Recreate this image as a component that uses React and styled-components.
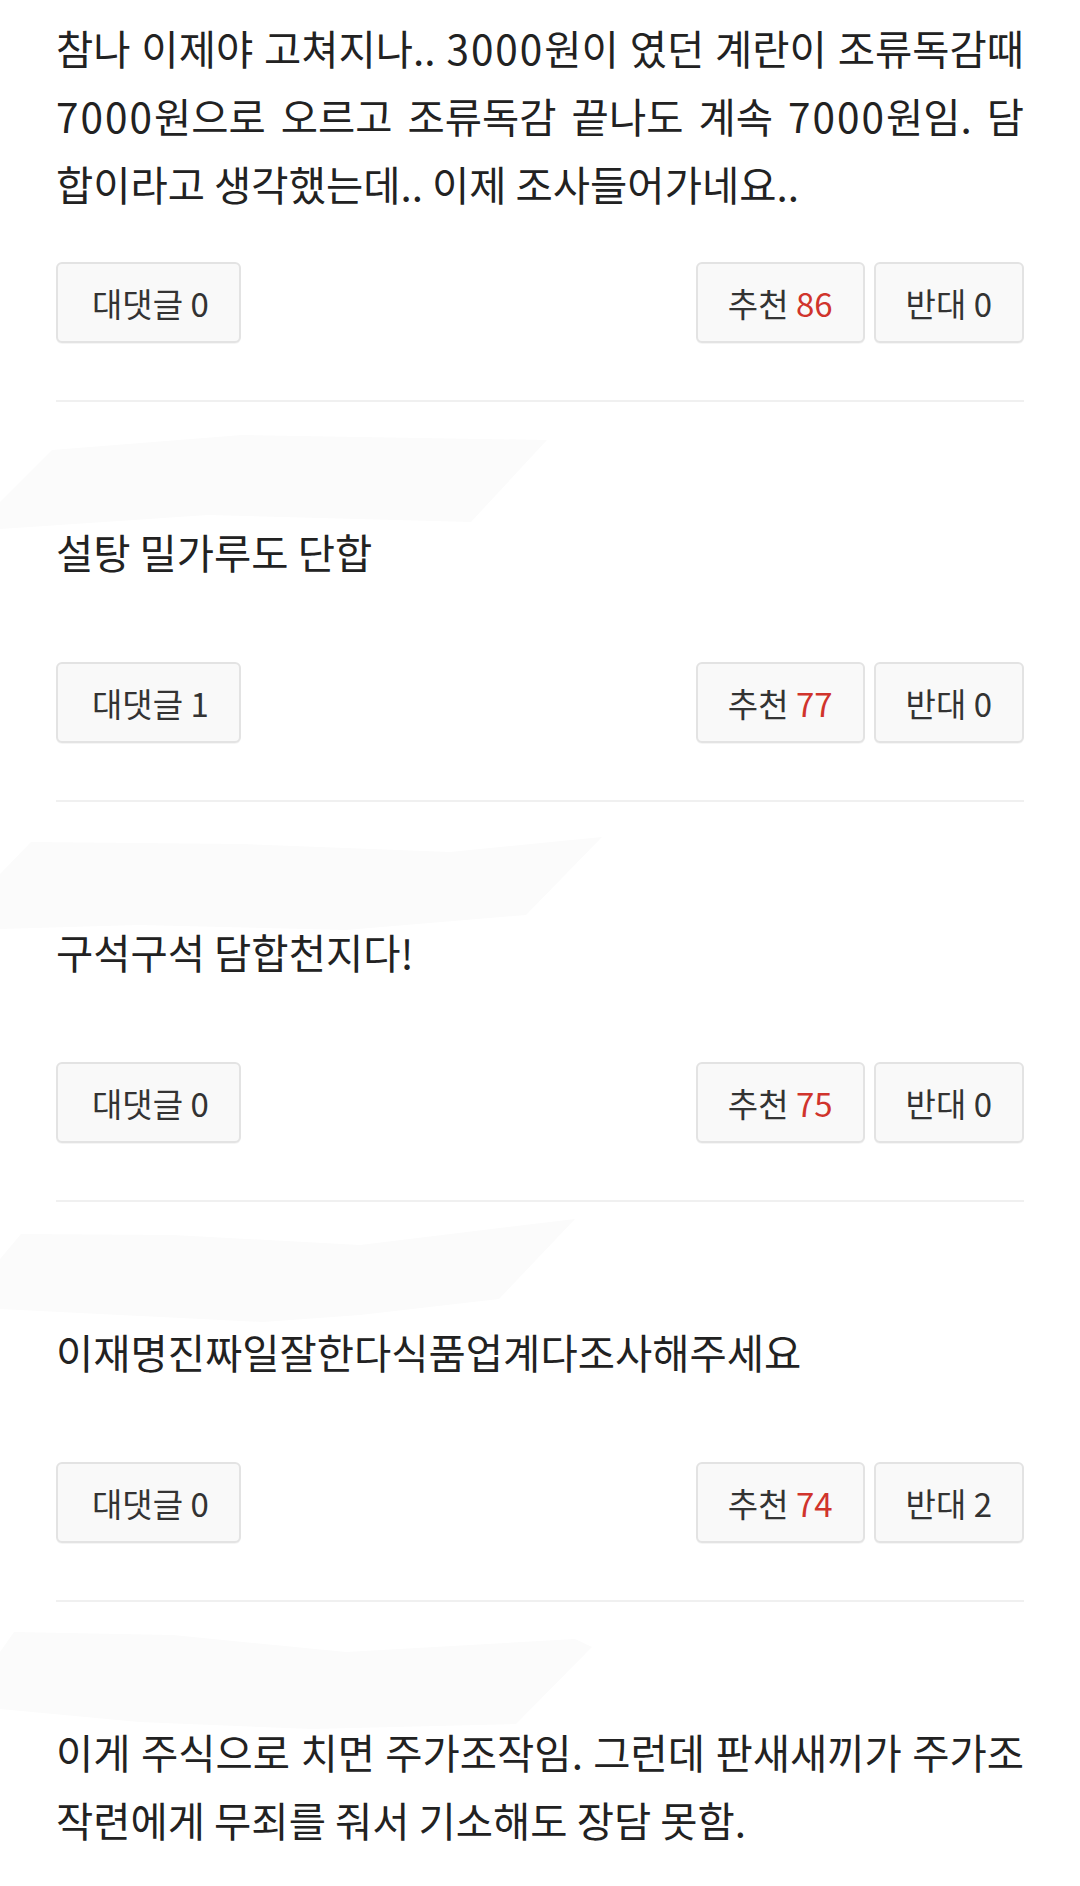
import styled, { createGlobalStyle } from "styled-components";

const GlobalStyle = createGlobalStyle`
  html, body {
    margin: 0;
    padding: 0;
    background: #fff;
  }
  body {
    font-family: "Noto Sans CJK KR", Roboto, sans-serif;
    -webkit-font-smoothing: antialiased;
  }
`;

const Page = styled.div`
  padding: 14px 56px 0;
  overflow: hidden;
`;

const Comment = styled.section`
  display: flex;
  flex-direction: column;
  border-top: ${({ $first }) => ($first ? "none" : "2px solid #f0f0f0")};
  padding-bottom: 57px;
`;

const Header = styled.svg`
  display: block;
  width: calc(100% + 112px);
  height: 116px;
  margin: 0 -56px;
  overflow: visible;
`;

const Body = styled.p`
  margin: 0;
  min-height: 100px;
  font-size: 40.5px;
  line-height: 68px;
  color: #222;
  text-align: justify;
`;

// digits in the reference run a little wider than the CJK font's own
const Num = styled.span`
  letter-spacing: ${({ $spacing }) => $spacing}px;
`;

const Actions = styled.div`
  display: flex;
  justify-content: space-between;
  align-items: center;
  margin-top: 44px;
`;

const VoteGroup = styled.div`
  display: flex;
  gap: 9px;
`;

const ActionButton = styled.button`
  height: 81px;
  padding: ${({ $wide }) => ($wide ? "0 30px 0 34px" : "0 30px")};
  border: 2px solid #e3e3e3;
  border-radius: 6px;
  background: #f9f9f9;
  box-shadow: 0 1px 0 rgba(0, 0, 0, 0.04);
  font-family: "Noto Sans CJK KR", Roboto, sans-serif;
  font-size: 33px;
  color: #333;
  cursor: pointer;
`;

const Count = styled.span`
  color: #d0342c;
`;

const comments = [
  {
    text: "참나 이제야 고쳐지나.. 3000원이 였던 계란이 조류독감때 7000원으로 오르고 조류독감 끝나도 계속 7000원임. 담합이라고 생각했는데.. 이제 조사들어가네요..",
    replies: 0,
    up: 86,
    down: 0,
  },
  {
    smudge: "52,48 242,33 547,38 471,120 208,113 0,127 0,100",
    text: "설탕 밀가루도 단합",
    replies: 1,
    up: 77,
    down: 0,
  },
  {
    smudge: "31,40 242,42 450,50 602,35 526,113 346,128 139,123 0,127 0,72",
    text: "구석구석 담합천지다!",
    replies: 0,
    up: 75,
    down: 0,
  },
  {
    smudge: "21,32 173,33 360,43 575,17 499,97 360,113 263,120 0,107 0,57",
    text: "이재명진짜일잘한다식품업계다조사해주세요",
    replies: 0,
    up: 74,
    down: 2,
  },
  {
    smudge: "14,30 173,33 346,50 575,37 592,45 516,122 312,127 139,120 0,107 0,50",
    text: "이게 주식으로 치면 주가조작임. 그런데 판새새끼가 주가조작련에게 무죄를 줘서 기소해도 장담 못함.",
    noActions: true,
  },
];

const withNumbers = (text, spacing) =>
  text.split(/(\d+)/).map((part, i) =>
    /^\d+$/.test(part) ? (
      <Num key={i} $spacing={spacing}>
        {part}
      </Num>
    ) : (
      part
    ),
  );

const CommentItem = ({ comment, first }) => (
  <Comment $first={first}>
    {comment.smudge && (
      <Header>
        <polygon points={comment.smudge} fill="#fbfbfb" />
      </Header>
    )}
    <Body>{withNumbers(comment.text, 2)}</Body>
    {!comment.noActions && (
      <Actions>
        <ActionButton type="button" $wide>
          대댓글 {comment.replies}
        </ActionButton>
        <VoteGroup>
          <ActionButton type="button">
            추천 <Count>{comment.up}</Count>
          </ActionButton>
          <ActionButton type="button">반대 {comment.down}</ActionButton>
        </VoteGroup>
      </Actions>
    )}
  </Comment>
);

export default function App() {
  return (
    <>
      <GlobalStyle />
      <Page>
        {comments.map((comment, index) => (
          <CommentItem key={index} comment={comment} first={index === 0} />
        ))}
      </Page>
    </>
  );
}
